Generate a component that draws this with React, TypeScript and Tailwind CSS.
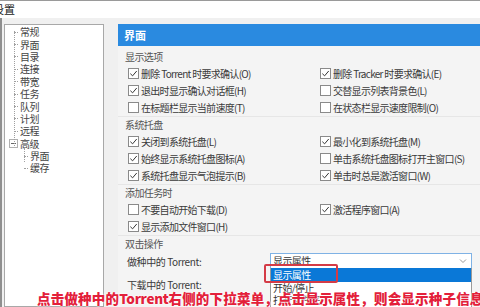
import React from "react";

const font = { fontFamily: '"Noto Sans CJK SC", "Noto Sans", sans-serif' };

function Check({ on, label }: { on?: boolean; label: string }) {
  return (
    <div className="flex items-center h-[17px] gap-[2px]">
      <div className="w-[11px] h-[11px] border border-[#8a8a8a] bg-white flex items-center justify-center shrink-0">
        {on && (
          <svg width="9" height="9" viewBox="0 0 10 10">
            <path d="M1.5 5.2 L4 7.6 L8.6 2.2" fill="none" stroke="#333" strokeWidth="1.1" />
          </svg>
        )}
      </div>
      <span className="text-[10px] tracking-[-0.7px] leading-[17px] text-[#3a3a3a] whitespace-nowrap">{label}</span>
    </div>
  );
}

function Group({ title, rows }: { title: string; rows: [boolean, string, boolean?, string?][] }) {
  return (
    <div className="border-t border-[#e6e6e6] first:border-t-0">
      <div className="h-[12px] text-[10px] tracking-[-0.6px] leading-[12px] text-[#555] pl-[7px] mt-[2px]">{title}</div>
      <div className="mt-[2px] pl-[10px] flex flex-col">
        {rows.map((r, i) => (
          <div key={i} className="grid grid-cols-[192px_1fr]">
            <Check on={r[0]} label={r[1]} />
            {r[3] ? <Check on={r[2]} label={r[3]} /> : <div />}
          </div>
        ))}
      </div>
    </div>
  );
}

const tree = ["常规", "界面", "目录", "连接", "带宽", "任务", "队列", "计划", "远程"];

export default function App() {
  return (
    <div className="w-[480px] h-[307px] overflow-hidden relative bg-white" style={font}>
      <div className="h-[18px] border-t border-[#9a9a9a] flex items-center">
        <span className="ml-[-7px] text-[11px] text-[#222]">设置</span>
      </div>
      <div className="h-[289px] flex bg-[#f0f0f0] border-l-2 border-[#8f8f8f]">
        <div className="w-[100px] shrink-0 mt-[6px] ml-[2px] bg-white border border-[#a8a8a8] relative">
          <div className="absolute left-[9px] top-[6px] h-[115px] border-l border-dotted border-[#a0a0a0]" />
          <div className="pt-[1px] flex flex-col">
            {tree.map((t) => (
              <div key={t} className="flex items-center h-[12.4px]">
                <div className="ml-[9px] w-[4px] mr-[2px] border-t border-dotted border-[#a0a0a0]" />
                <span className="text-[10px] tracking-[-0.4px] leading-[12px] text-[#444]">{t}</span>
              </div>
            ))}
            <div className="flex items-center h-[12.4px]">
              <div className="ml-[4px] w-[9px] h-[9px] border border-[#b0b0b0] flex items-center justify-center mr-[2px]">
                <div className="w-[5px] border-t border-[#666]" />
              </div>
              <span className="text-[10px] tracking-[-0.4px] leading-[12px] text-[#444]">高级</span>
            </div>
            <div className="relative">
              <div className="absolute left-[19px] top-[-2px] h-[14px] border-l border-dotted border-[#a0a0a0]" />
              {["界面", "缓存"].map((t) => (
                <div key={t} className="flex items-center h-[12.4px]">
                  <div className="ml-[19px] w-[4px] mr-[2px] border-t border-dotted border-[#a0a0a0]" />
                  <span className="text-[10px] tracking-[-0.4px] leading-[12px] text-[#444]">{t}</span>
                </div>
              ))}
            </div>
          </div>
        </div>
        <div className="ml-[14px] mt-[6px] flex-1 min-w-0 overflow-hidden flex flex-col">
          <div className="h-[22px] bg-[#2a8ae0] flex items-center pl-[6px]">
            <span className="text-white text-[11px] font-bold">界面</span>
          </div>
          <div className="flex-1 bg-[#f4f4f4] pt-[3px]">
            <Group
              title="显示选项"
              rows={[
                [true, "删除 Torrent 时要求确认(O)", true, "删除 Tracker 时要求确认(E)"],
                [true, "退出时显示确认对话框(H)", false, "交替显示列表背景色(L)"],
                [false, "在标题栏显示当前速度(T)", false, "在状态栏显示速度限制(O)"],
              ]}
            />
            <Group
              title="系统托盘"
              rows={[
                [true, "关闭到系统托盘(L)", true, "最小化到系统托盘(M)"],
                [true, "始终显示系统托盘图标(A)", false, "单击系统托盘图标打开主窗口(S)"],
                [true, "系统托盘显示气泡提示(B)", true, "单击时总是激活窗口(W)"],
              ]}
            />
            <Group
              title="添加任务时"
              rows={[
                [false, "不要自动开始下载(D)", true, "激活程序窗口(A)"],
                [true, "显示添加文件窗口(H)"],
              ]}
            />
            <div className="border-t border-[#e6e6e6]">
              <div className="h-[12px] text-[10px] tracking-[-0.6px] leading-[12px] text-[#555] pl-[7px] mt-[2px]">双击操作</div>
              <div className="flex items-center h-[18px] mt-[2px] pl-[9px]">
                <span className="w-[143px] text-[10px] tracking-[-0.4px] text-[#3a3a3a]">做种中的 Torrent:</span>
                <div className="w-[202px] h-[16px] bg-white border border-[#7fb2e5] flex items-center justify-between pl-[2px] pr-[4px]">
                  <span className="text-[10px] tracking-[-0.6px] leading-[14px] text-[#333]">显示属性</span>
                  <svg width="8" height="6" viewBox="0 0 8 6">
                    <path d="M1 1.5 L4 4.5 L7 1.5" fill="none" stroke="#999" strokeWidth="1" />
                  </svg>
                </div>
              </div>
              <div className="flex items-center h-[18px] mt-[5px] pl-[9px]">
                <span className="text-[10px] tracking-[-0.4px] text-[#3a3a3a]">下载中的 Torrent:</span>
              </div>
            </div>
          </div>
        </div>
      </div>
      <div className="absolute left-[270px] top-[268px] w-[202px] h-[40px] bg-white border border-[#9a9a9a] border-t-0">
        <div className="h-[14px] bg-[#0a78d7] text-white text-[10px] tracking-[-0.6px] leading-[14px] pl-[2px]">显示属性</div>
        <div className="h-[12px] text-[10px] tracking-[-0.6px] leading-[12px] text-[#333] pl-[2px]">开始/停止</div>
        <div className="h-[12px] text-[10px] tracking-[-0.6px] leading-[12px] text-[#333] pl-[2px]">打开文件夹</div>
      </div>
      <div className="absolute left-[264px] top-[264px] w-[74px] h-[19px] border-2 border-[#d43b46] rounded-[2px]" />
      <div className="absolute left-[37px] top-[288px] whitespace-nowrap text-[13.5px] tracking-[0.2px] leading-[20px] font-extrabold text-[#e3203a] [text-shadow:0_0_2px_#fff,0_0_2px_#fff]">
        点击做种中的<span className="tracking-[-0.3px]">Torrent</span>右侧的下拉菜单，点击显示属性，则会显示种子信息
      </div>
    </div>
  );
}
